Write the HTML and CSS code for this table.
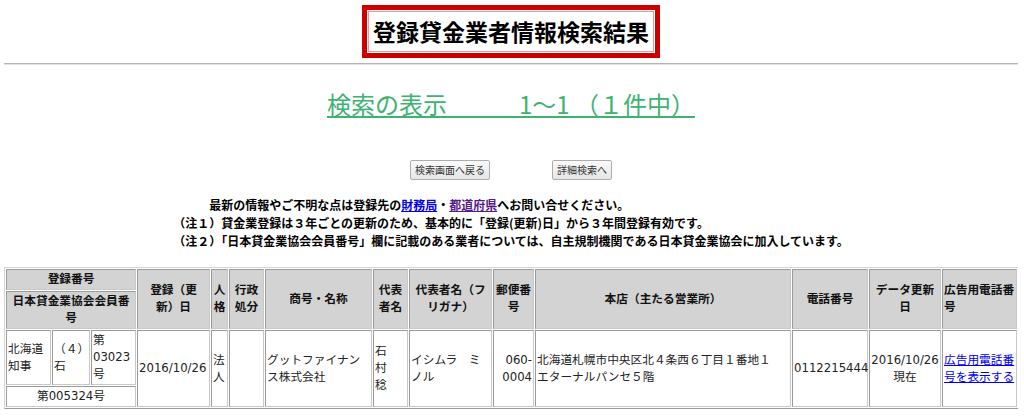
FILE: index.html
```html
<!DOCTYPE html>
<html lang="ja">
<head>
<meta charset="utf-8">
<title>登録貸金業者情報検索結果</title>
<link rel="stylesheet" href="styles.css">
</head>
<body>
<div class="masthead">
  <div class="title-box"><h1 class="title">登録貸金業者情報検索結果</h1></div>
</div>
<hr class="rule">
<p class="result"><a class="result-link" href="#">検索の表示　　　1～1 （１件中）</a></p>
<div class="actions">
  <button class="btn" type="button">検索画面へ戻る</button>
  <button class="btn" type="button">詳細検索へ</button>
</div>
<div class="notes">
  <p>　　　最新の情報やご不明な点は登録先の<a class="link" href="#">財務局</a>・<a class="link visited" href="#">都道府県</a>へお問い合せください。</p>
  <p>（注１）貸金業登録は３年ごとの更新のため、基本的に「登録(更新)日」から３年間登録有効です。</p>
  <p>（注２）「日本貸金業協会会員番号」欄に記載のある業者については、自主規制機関である日本貸金業協会に加入しています。</p>
</div>
<table class="results">
  <colgroup>
    <col class="c-auth"><col class="c-count"><col class="c-no"><col class="c-date"><col class="c-type"><col class="c-admin"><col class="c-name"><col class="c-rep"><col class="c-kana"><col class="c-zip"><col class="c-addr"><col class="c-tel"><col class="c-upd"><col class="c-ad">
  </colgroup>
  <thead>
    <tr>
      <th colspan="3">登録番号</th>
      <th rowspan="2">登録（更<br>新）日</th>
      <th rowspan="2">人格</th>
      <th rowspan="2">行政処分</th>
      <th rowspan="2">商号・名称</th>
      <th rowspan="2">代表者名</th>
      <th rowspan="2">代表者名（フリガナ）</th>
      <th rowspan="2">郵便番号</th>
      <th rowspan="2">本店（主たる営業所）</th>
      <th rowspan="2">電話番号</th>
      <th rowspan="2">データ更新日</th>
      <th rowspan="2" class="left">広告用電話番号</th>
    </tr>
    <tr>
      <th colspan="3">日本貸金業協会会員番号</th>
    </tr>
  </thead>
  <tbody>
    <tr>
      <td>北海道知事</td>
      <td>（４）石</td>
      <td>第03023号</td>
      <td rowspan="2">2016/10/26</td>
      <td rowspan="2">法人</td>
      <td rowspan="2"></td>
      <td rowspan="2">グットファイナンス株式会社</td>
      <td rowspan="2">石<br>村<br>稔</td>
      <td rowspan="2">イシムラ　ミノル</td>
      <td rowspan="2" class="right">060-0004</td>
      <td rowspan="2">北海道札幌市中央区北４条西６丁目１番地１<br>エターナルパンセ５階</td>
      <td rowspan="2">0112215444</td>
      <td rowspan="2" class="center">2016/10/26現在</td>
      <td rowspan="2"><a class="link" href="#">広告用電話番号を表示する</a></td>
    </tr>
    <tr>
      <td colspan="3" class="center">第005324号</td>
    </tr>
  </tbody>
</table>
</body>
</html>
```
FILE: styles.css
```css
body {
  margin: 0 6px 0 4px;
  font-family: "Noto Sans CJK JP", sans-serif;
  color: #000;
  background: #fff;
}

.masthead {
  padding-top: 5px;
  text-align: center;
}

.title-box {
  display: inline-block;
  border: 5px solid #cc0000;
  padding: 1px;
}

.title {
  margin: 0;
  border: 1px solid #e59a9a;
  padding: 0 4px;
  font-size: 23px;
  font-weight: bold;
  line-height: 39px;
}

.rule {
  margin: 5px 0 0;
  height: 0;
  border: 0;
  border-top: 1px solid #b4b4b4;
  border-bottom: 1px solid #e2e2e2;
}

.result {
  margin: 21px 0 0;
  text-align: center;
  font-size: 24px;
  line-height: 35px;
}

.result-link {
  color: #3cb371;
}

.actions {
  margin-top: 39px;
  display: flex;
  justify-content: center;
  gap: 62px;
}

.btn {
  height: 20px;
  margin: 0;
  padding: 0 4px;
  border: 1px solid #adadad;
  border-radius: 2px;
  background: linear-gradient(#fbfbfb, #e5e5e5);
  font-family: "Noto Sans CJK JP", sans-serif;
  font-size: 10px;
  line-height: 18px;
  color: #333;
}

.notes {
  width: fit-content;
  margin: 16px auto 0;
  font-size: 12px;
  font-weight: bold;
  line-height: 18px;
}

.notes p {
  margin: 0;
}

.link {
  color: #0000ee;
}

.link.visited {
  color: #551a8b;
}

.results {
  margin-top: 17px;
  width: 1015px;
  table-layout: fixed;
  border-collapse: separate;
  border-spacing: 1px;
  border: 1px solid;
  border-color: #d4d4d4 #9a9a9a #9a9a9a #d4d4d4;
  font-family: "DejaVu Sans", "Noto Sans CJK JP", sans-serif;
  font-size: 11.7px;
  line-height: 17px;
  color: #222;
}

.results th,
.results td {
  padding: 1px;
  border: 1px solid;
  border-color: #9a9a9a #c8c8c8 #c8c8c8 #9a9a9a;
  vertical-align: middle;
  overflow: visible;
}

.results th {
  background: #d3d3d3;
  font-weight: bold;
  text-align: center;
  color: #111;
}

.results td {
  text-align: left;
  background: #fff;
}

.results .left { text-align: left; }
.results .right { text-align: right; }
.results .center { text-align: center; }

.c-auth { width: 45px; }
.c-count { width: 38px; }
.c-no { width: 45px; }
.c-date { width: 73px; }
.c-type { width: 17px; }
.c-admin { width: 35px; }
.c-name { width: 107px; }
.c-rep { width: 35px; }
.c-kana { width: 83px; }
.c-zip { width: 41px; }
.c-addr { width: 256px; }
.c-tel { width: 76px; }
.c-upd { width: 72px; }
.c-ad { width: 75px; }
```
